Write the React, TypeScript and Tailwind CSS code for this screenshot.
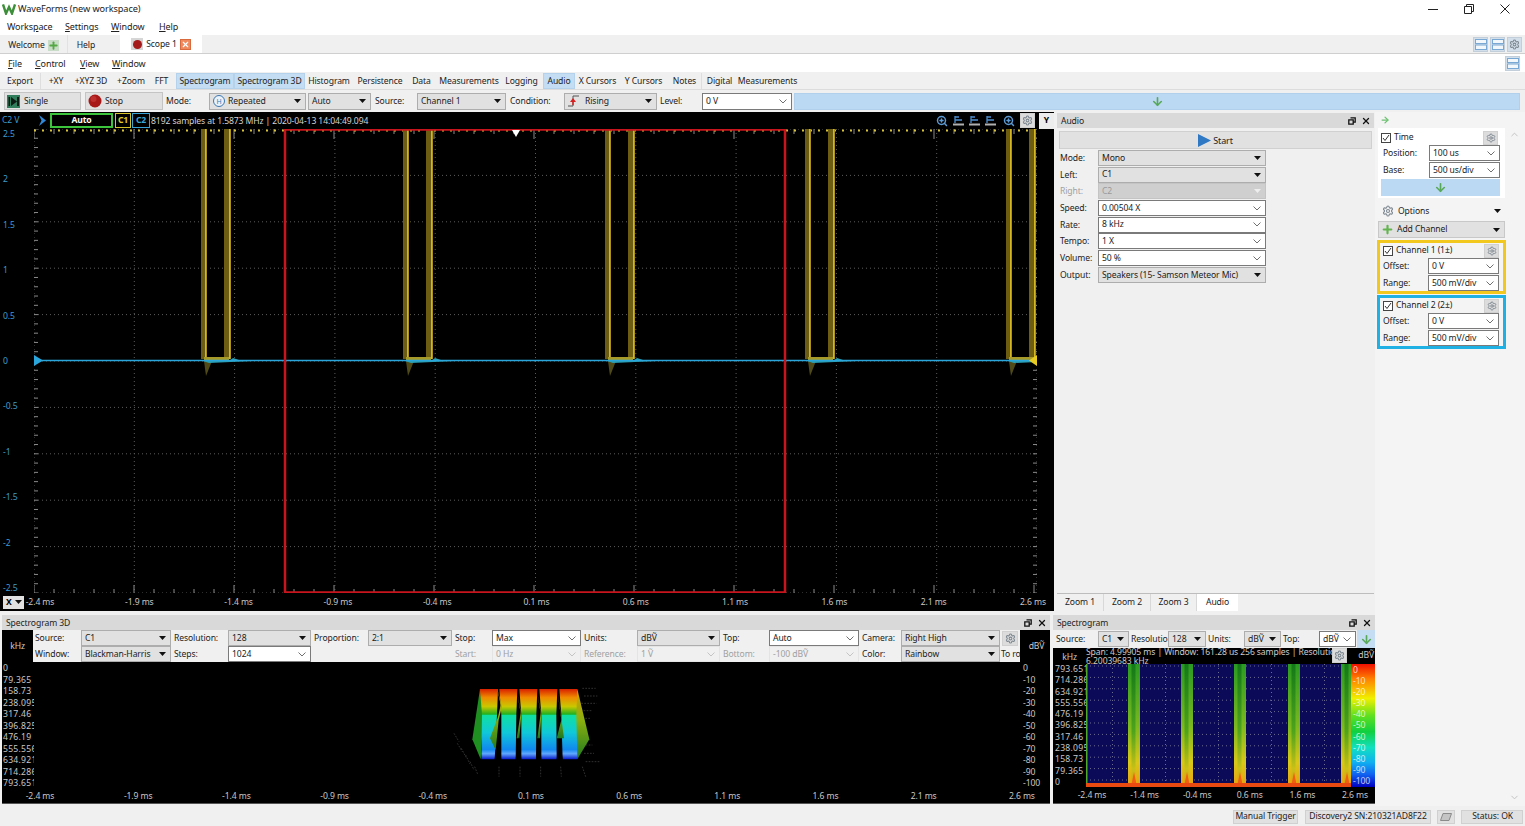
import React from "react";
import { X, Settings, ZoomIn, Plus, ArrowRight, ArrowDown, ChevronDown, ChevronUp } from "lucide-react";

type Kind = "gray" | "white" | "dis" | "disGray";

const Caret = ({ light }: { light?: boolean }) => (
  <svg width="7" height="4" viewBox="0 0 7 4" className="shrink-0">
    <path d="M0 0H7L3.5 4Z" fill={light ? "#eeeeee" : "#111111"} />
  </svg>
);
const Chev = ({ light }: { light?: boolean }) => (
  <svg width="8" height="5" viewBox="0 0 8 5" className="shrink-0">
    <path d="M0.5 0.5L4 4L7.5 0.5" fill="none" stroke={light ? "#c4c4c4" : "#707070"} strokeWidth="1" />
  </svg>
);

function Sel({ v, kind = "white", className = "", icon }: { v: string; kind?: Kind; className?: string; icon?: React.ReactNode }) {
  const k = {
    gray: "bg-[#e1e1e1] border-[#adadad] text-[#222]",
    white: "bg-white border-[#7a7a7a] text-[#222]",
    dis: "bg-[#f0f0f0] border-[#e4e4e4] text-[#a0a0a0]",
    disGray: "bg-[#cfcfcf] border-[#c4c4c4] text-[#9a9a9a]",
  }[kind];
  return (
    <div className={`flex items-center justify-between h-[16px] border pl-[3px] pr-[4px] overflow-hidden whitespace-nowrap ${k} ${className}`}>
      <span className="flex items-center gap-[3px] min-w-0">{icon}{v}</span>
      {kind === "gray" && <Caret />}
      {kind === "disGray" && <Caret light />}
      {kind === "white" && <Chev />}
      {kind === "dis" && <Chev light />}
    </div>
  );
}

const Gear = ({ size = 10, box = "w-[15px] h-[14px]" }: { size?: number; box?: string }) => (
  <div className={`flex items-center justify-center bg-[#dcdcdc] border border-[#d0d0d0] shrink-0 ${box}`}>
    <Settings size={size} strokeWidth={2.2} color="#7d8790" />
  </div>
);

const Check = () => (
  <div className="w-[10px] h-[10px] border border-[#444] bg-white flex items-center justify-center shrink-0">
    <svg width="8" height="8" viewBox="0 0 8 8"><path d="M1 4L3 6.5L7 1" fill="none" stroke="#333" strokeWidth="1" /></svg>
  </div>
);

const TitleBtns = () => (
  <div className="flex items-center gap-[5px] ml-auto pr-[3px]">
    <svg width="8" height="8" viewBox="0 0 8 8"><path d="M2.5 0.8H7.2V5.2H5.5M0.8 2.8H5.2V7.2H0.8Z" fill="none" stroke="#111" strokeWidth="1.3" /></svg>
    <X size={10} strokeWidth={3} color="#111" />
  </div>
);

const PanelTitle = ({ t }: { t: string }) => (
  <div className="flex items-center h-[15px] bg-[#d9d9d9] pl-[4px] text-[#222] shrink-0">
    <span className="pt-[1px]">{t}</span>
    <TitleBtns />
  </div>
);

const LayoutIcon = ({ kind }: { kind: number }) => (
  <div className="w-[15px] h-[15px] bg-[#d3dfea] border border-[#c2ced9] flex items-center justify-center shrink-0">
    {kind === 2 ? (
      <Settings size={11} strokeWidth={2.2} color="#7d8790" />
    ) : (
      <svg width="12" height="11" viewBox="0 0 12 11">
        <rect x="0.5" y="0.5" width="11" height="4" fill="#f2f7fb" stroke="#79a8d4" />
        <rect x="0.5" y="6" width="11" height="4.5" fill="#f2f7fb" stroke="#79a8d4" />
      </svg>
    )}
  </div>
);

const toolbar: [string, string, boolean?][] = [
  ["Export", "w-[41px] border-r border-[#dedede]"],
  ["+XY", "w-[24px] ml-[3px]"],
  ["+XYZ 3D", "w-[44px] ml-[1px]"],
  ["+Zoom", "w-[36px]"],
  ["FFT", "w-[25px]"],
  ["Spectrogram", "w-[58px] ml-[2px]", true],
  ["Spectrogram 3D", "w-[71px]", true],
  ["Histogram", "w-[48px]"],
  ["Persistence", "w-[54px]"],
  ["Data", "w-[29px]"],
  ["Measurements", "w-[66px]"],
  ["Logging", "w-[39px]"],
  ["Audio", "w-[32px] ml-[2px]", true],
  ["X Cursors", "w-[43px] ml-[1px]"],
  ["Y Cursors", "w-[49px]"],
  ["Notes", "w-[34px] border-r border-[#dedede]"],
  ["Digital", "w-[35px]"],
  ["Measurements", "w-[61px]"],
];

const PULSES = [203, 405, 607, 807, 1008];

function ScopePlot() {
  const W = 1003, H = 464;
  const ticks: number[] = [];
  for (let x = 0; x <= W; x += 20) ticks.push(x);
  const sub: number[] = [];
  for (let y = 0; y <= H; y += 9.28) sub.push(y);
  return (
    <svg width={W} height={H} viewBox={`0 0 ${W} ${H}`} className="block shrink-0">
      <rect width={W} height={H} fill="#000" />
      {Array.from({ length: 11 }, (_, i) => (
        <line key={i} x1={i * 100.3} x2={i * 100.3} y1="0" y2={H} stroke="#5c5c5c" strokeWidth="1" strokeDasharray="1 3" />
      ))}
      {Array.from({ length: 11 }, (_, i) => (
        <line key={i} x1="0" x2={W} y1={i * 46.4} y2={i * 46.4} stroke="#5c5c5c" strokeWidth="1" strokeDasharray="1 3" />
      ))}
      {ticks.map((x) => (
        <g key={x}>
          <line x1={x} x2={x} y1="0" y2={x % 100 === 0 ? 10 : 5} stroke="#8a8a8a" />
          <line x1={x} x2={x} y1={H} y2={H - (x % 100 === 0 ? 8 : 4)} stroke="#8a8a8a" />
        </g>
      ))}
      {sub.map((y) => (
        <g key={y}>
          <line x1="0" x2="4" y1={y} y2={y} stroke="#8a8a8a" />
          <line x1={W - 4} x2={W} y1={y} y2={y} stroke="#8a8a8a" />
        </g>
      ))}
      <line x1="0" x2={W} y1="1.5" y2="1.5" stroke="#d8c23a" strokeWidth="2" strokeDasharray="2 6" />
      {PULSES.map((p, i) => {
        const a = p - 34;
        return (
          <g key={i}>
            <rect x={a - 2} y="0" width="6" height="230" fill="#6c5d12" />
            <rect x={a + 2} y="0" width="1.6" height="230" fill="#d4b522" />
            <rect x={a + 21} y="0" width="7" height="230" fill="#6c5d12" />
            <rect x={a + 26} y="0" width="1.6" height="230" fill="#d4b522" />
            <rect x={a + 1} y="228" width="25" height="3" fill="#a89a28" />
            <polygon points={`${a + 1},232 ${a + 9},232 ${a + 3},247`} fill="#4f4a18" />
            <polygon points={`${a},232 ${a + 26},232 ${a + 30},229 ${a + 36},231 ${a + 50},232 ${a + 6},234`} fill="#2a9fb5" />
          </g>
        );
      })}
      <line x1="0" x2={W} y1="231.5" y2="231.5" stroke="#2ba6dc" strokeWidth="1.6" />
      <rect x="251" y="0.5" width="500" height="463" fill="none" stroke="#c8141c" strokeWidth="2.5" />
      <polygon points="478,1 486,1 482,8" fill="#fff" />
      <polygon points="0,226 9,231.5 0,237" fill="#2ba6dc" />
      <polygon points="1003,226 995,231.5 1003,237" fill="#e8cb22" />
    </svg>
  );
}

function Spec3D() {
  const cols = [
    [108, 162, 152, 112],
    [166, 220, 215, 172],
    [226, 280, 276, 232],
    [286, 340, 338, 292],
    [346, 400, 400, 356],
  ];
  return (
    <svg width="170" height="110" viewBox="0 0 510 330" className="block -mt-[2px]">
      <defs>
        <linearGradient id="r3" x1="0" y1="0" x2="0" y2="1">
          <stop offset="0" stopColor="#d82000" />
          <stop offset="0.12" stopColor="#f08a00" />
          <stop offset="0.25" stopColor="#c8c800" />
          <stop offset="0.36" stopColor="#20b020" />
          <stop offset="0.37" stopColor="#10e0a0" />
          <stop offset="0.62" stopColor="#10c8d8" />
          <stop offset="0.86" stopColor="#1088f0" />
          <stop offset="0.92" stopColor="#60a8ff" />
          <stop offset="1" stopColor="#0818c8" />
        </linearGradient>
        <linearGradient id="s3" x1="0" y1="0" x2="0" y2="1">
          <stop offset="0" stopColor="#d8a000" />
          <stop offset="0.45" stopColor="#8ab010" />
          <stop offset="1" stopColor="#1f7a20" />
        </linearGradient>
      </defs>
      {[[30, 190, 45, 215], [40, 220, 55, 245], [52, 235, 66, 262], [65, 255, 78, 282], [78, 275, 90, 300], [92, 290, 102, 315], [165, 290, 165, 320], [228, 290, 228, 320], [290, 290, 290, 320], [350, 290, 352, 320], [415, 290, 425, 320]].map((d, i) => (
        <line key={i} x1={d[0]} y1={d[1]} x2={d[2]} y2={d[3]} stroke="#4a4a4a" strokeWidth="2" strokeDasharray="5 4" />
      ))}
      {[[415, 55, 455], [420, 78, 460], [412, 100, 458], [410, 122, 445], [415, 145, 440], [425, 225, 445], [420, 250, 450], [425, 275, 468]].map((d, i) => (
        <line key={i} x1={d[0]} y1={d[1]} x2={d[2]} y2={d[1]} stroke="#4a4a4a" strokeWidth="2" strokeDasharray="5 4" />
      ))}
      <polygon points="108,57 118,135 110,268 85,208" fill="#1f8f22" />
      <polygon points="108,57 122,80 118,135" fill="#c87a00" />
      <polygon points="400,57 436,208 400,268 388,135" fill="url(#s3)" />
      {cols.map((c, i) => (
        <polygon key={i} points={`${c[0]},57 ${c[1]},57 ${c[1] - 3},135 ${c[2]},268 ${c[3]},268 ${c[0] + 6},135`} fill="url(#r3)" />
      ))}
      <polygon points="160,57 170,105 162,140 138,205 155,240 164,150 174,110" fill="url(#s3)" />
      <polygon points="220,70 230,130 218,205 226,205 232,135" fill="url(#s3)" />
      <polygon points="280,70 290,130 280,205 288,205 292,135" fill="url(#s3)" />
      <polygon points="340,60 352,150 338,205 360,205 350,130" fill="url(#s3)" />
      {[[152, 268, 172, 268, 162, 215], [215, 268, 232, 268, 224, 200], [276, 268, 292, 268, 285, 200], [338, 268, 356, 268, 347, 208]].map((t, i) => (
        <polygon key={i} points={`${t[0]},${t[1]} ${t[2]},${t[3]} ${t[4]},${t[5]}`} fill="#000" />
      ))}
    </svg>
  );
}

function SpecPlot() {
  const bands = [42, 95, 148, 202, 255];
  return (
    <svg width="265" height="123" viewBox="0 0 265 123" className="block shrink-0 relative z-0">
      <defs>
        <linearGradient id="b1" x1="0" y1="0" x2="0" y2="1">
          <stop offset="0" stopColor="#2a9a22" />
          <stop offset="0.5" stopColor="#7ab820" />
          <stop offset="0.8" stopColor="#d8c818" />
          <stop offset="1" stopColor="#e8a010" />
        </linearGradient>
        <linearGradient id="b2" x1="0" y1="0" x2="0" y2="1">
          <stop offset="0" stopColor="#127818" />
          <stop offset="0.55" stopColor="#4fa41c" />
          <stop offset="0.85" stopColor="#c8c018" />
          <stop offset="1" stopColor="#e09010" />
        </linearGradient>
      </defs>
      <rect width="265" height="123" fill="#0a0a58" />
      {Array.from({ length: 11 }, (_, i) => (
        <line key={i} x1="0" x2="265" y1={i * 11.4 + 2} y2={i * 11.4 + 2} stroke="#6c6c90" strokeDasharray="1 3" />
      ))}
      {Array.from({ length: 11 }, (_, i) => (
        <line key={i} x1={i * 26.5} x2={i * 26.5} y1="0" y2="123" stroke="#6c6c90" strokeDasharray="1 3" />
      ))}
      <rect x="0" y="0" width="1.5" height="123" fill="#4faa2a" />
      {bands.map((x, i) => (
        <g key={i}>
          <rect x={x} y="0" width={i === 4 ? 10 : 12} height="123" fill="url(#b1)" />
          <rect x={x + 3.5} y="0" width="4" height="123" fill="url(#b2)" />
          <polygon points={`${x + 3},123 ${x + 9},123 ${x + 6},108`} fill="#f06010" />
        </g>
      ))}
      <rect x="0" y="119" width="265" height="4" fill="#e84a10" />
    </svg>
  );
}

const Row3D = ({ labels }: { labels: string[] }) => (
  <>
    {labels.map((t) => (
      <span key={t} className="block h-[11.5px] leading-[11.5px] whitespace-nowrap">{t}</span>
    ))}
  </>
);

const AxisLabels = ({ labels }: { labels: string[] }) => (
  <>
    {labels.map((t) => (
      <span key={t} className="w-[32px] text-center whitespace-nowrap">{t}</span>
    ))}
  </>
);

const KHZ = ["0", "79.365", "158.73", "238.095", "317.46", "396.825", "476.19", "555.556", "634.921", "714.286", "793.651"];
const DB = ["0", "-10", "-20", "-30", "-40", "-50", "-60", "-70", "-80", "-90", "-100"];
const XT = ["-2.4 ms", "-1.9 ms", "-1.4 ms", "-0.9 ms", "-0.4 ms", "0.1 ms", "0.6 ms", "1.1 ms", "1.6 ms", "2.1 ms", "2.6 ms"];

function ChannelBox({ name, color }: { name: string; color: string }) {
  return (
    <div className={`border-[3px] h-[54px] flex flex-col px-[1px] ${color}`}>
      <div className="flex items-center h-[15px] gap-[3px] pl-[2px] pr-[3px] shrink-0">
        <Check />
        <span>{name}</span>
        <div className="ml-auto"><Gear /></div>
      </div>
      <div className="grid grid-cols-[47px_71px] gap-y-[1px]">
        <span className="pl-[2px] leading-[16px]">Offset:</span><Sel v="0 V" />
        <span className="pl-[2px] leading-[16px]">Range:</span><Sel v="500 mV/div" />
      </div>
    </div>
  );
}

const AUDIO: [string, string, Kind][] = [
  ["Mode:", "Mono", "gray"],
  ["Left:", "C1", "gray"],
  ["Right:", "C2", "disGray"],
  ["Speed:", "0.00504 X", "white"],
  ["Rate:", "8 kHz", "white"],
  ["Tempo:", "1 X", "white"],
  ["Volume:", "50 %", "white"],
  ["Output:", "Speakers (15- Samson Meteor Mic)", "gray"],
];

export default function App() {
  return (
    <div className="w-[1525px] h-[826px] overflow-hidden flex flex-col bg-[#f0f0f0] text-[#222] text-[8.6px] tracking-[-0.1px] leading-none font-['Noto_Sans',sans-serif]">
      {/* title bar */}
      <div className="flex items-center h-[18px] bg-white shrink-0 pl-[2px] text-[9.2px]">
        <svg width="14" height="12" viewBox="0 0 14 12" className="mr-[2px]">
          <path d="M1 1.5L4 10.5L7 4L10 10.5L13 1.5" fill="none" stroke="#3d8f3a" strokeWidth="2.4" />
        </svg>
        <span>WaveForms (new workspace)</span>
        <div className="ml-auto flex items-center gap-[26px] pr-[15px]">
          <svg width="10" height="10" viewBox="0 0 10 10"><path d="M0 5.5H10" stroke="#222" strokeWidth="1" /></svg>
          <svg width="10" height="10" viewBox="0 0 10 10"><path d="M2.5 2.5V0.5H9.5V7.5H7.5M0.5 2.5H7.5V9.5H0.5Z" fill="none" stroke="#222" strokeWidth="1" /></svg>
          <svg width="10" height="10" viewBox="0 0 10 10"><path d="M0.5 0.5L9.5 9.5M9.5 0.5L0.5 9.5" stroke="#222" strokeWidth="1" /></svg>
        </div>
      </div>
      {/* menu */}
      <div className="flex items-center h-[17px] bg-white shrink-0 pl-[7px] text-[9px]">
        <span className="w-[58px]">Works<u>p</u>ace</span>
        <span className="w-[46px]"><u>S</u>ettings</span>
        <span className="w-[48px]"><u>W</u>indow</span>
        <span><u>H</u>elp</span>
      </div>
      {/* tabs */}
      <div className="flex items-stretch h-[19px] border-b border-[#cfcfcf] shrink-0">
        <div className="w-[68px] flex items-center justify-center gap-[3px] border-r border-[#e2e2e2] pt-[2px]">
          <span>Welcome</span>
          <div className="w-[11px] h-[11px] bg-[#c8dcc8] flex items-center justify-center"><Plus size={11} strokeWidth={4} color="#55a845" /></div>
        </div>
        <div className="w-[52px] flex items-center justify-center pr-[16px] pt-[2px]">Help</div>
        <div className="w-[82px] bg-white flex items-center justify-center gap-[3px]">
          <div className="bg-[#d6d6d6] w-[12px] h-[12px] flex items-center justify-center"><svg width="9" height="9" viewBox="0 0 9 9"><circle cx="4.5" cy="4.5" r="4.5" fill="#a51a1a" /></svg></div>
          <span>Scope 1</span>
          <div className="w-[11px] h-[11px] bg-[#ee8a5e] border border-[#d86a3e] flex items-center justify-center"><X size={9} strokeWidth={3} color="#fff" /></div>
        </div>
        <div className="ml-auto flex items-center gap-[2px] pr-[3px]">
          <LayoutIcon kind={0} /><LayoutIcon kind={1} /><LayoutIcon kind={2} />
        </div>
      </div>
      {/* scope menu */}
      <div className="flex items-center h-[18px] bg-white shrink-0 pl-[8px] text-[9px]">
        <span className="w-[27px]"><u>F</u>ile</span>
        <span className="w-[45px]"><u>C</u>ontrol</span>
        <span className="w-[32px]"><u>V</u>iew</span>
        <span><u>W</u>indow</span>
        <div className="ml-auto pr-[5px]"><LayoutIcon kind={0} /></div>
      </div>
      {/* toolbar */}
      <div className="flex items-center h-[18px] border-b border-[#dcdcdc] shrink-0">
        {toolbar.map(([t, c, active], i) => (
          <div key={i} className={`flex items-center justify-center h-[16px] pt-[1px] whitespace-nowrap ${c} ${active ? "bg-[#c4ddf3] border border-[#b4d2ec]" : ""}`}>{t}</div>
        ))}
      </div>
      {/* controls */}
      <div className="flex items-center h-[22px] shrink-0 pl-[4px]">
        <div className="w-[77px] h-[18px] bg-[#e1e1e1] border border-[#c4c4c4] flex items-center gap-[4px] pl-[2px]">
          <svg width="13" height="13" viewBox="0 0 13 13"><rect width="13" height="13" fill="#2f7d5a" /><path d="M3 2V11H1.5V2ZM4 2L10 6.5L4 11ZM10 2H12V11H10Z" fill="#0c1c14" /></svg>
          <span>Single</span>
        </div>
        <div className="w-[78px] h-[18px] ml-[4px] bg-[#e1e1e1] border border-[#c4c4c4] flex items-center gap-[3px] pl-[2px]">
          <svg width="14" height="14" viewBox="0 0 14 14"><circle cx="7" cy="7" r="6.5" fill="#a81818" /><circle cx="5.5" cy="5" r="3" fill="#cc4040" opacity="0.6" /></svg>
          <span>Stop</span>
        </div>
        <span className="w-[43px] ml-[3px]">Mode:</span>
        <Sel v="Repeated" kind="gray" className="w-[97px] !h-[17px]" icon={
          <span className="w-[12px] h-[12px] rounded-full border border-[#3d78b0] bg-[#eaf2fa] text-[#3d78b0] text-[7px] flex items-center justify-center">H</span>
        } />
        <Sel v="Auto" kind="gray" className="w-[63px] !h-[17px] ml-[2px]" />
        <span className="w-[42px] ml-[4px]">Source:</span>
        <Sel v="Channel 1" kind="gray" className="w-[89px] !h-[17px]" />
        <span className="w-[54px] ml-[4px]">Condition:</span>
        <Sel v="Rising" kind="gray" className="w-[93px] !h-[17px]" icon={
          <svg width="14" height="14" viewBox="0 0 14 14"><path d="M0 12H5V2H11" fill="none" stroke="#555" strokeWidth="1" /><path d="M5 4L8 8H2Z" fill="#d82020" /><rect x="4.3" y="7" width="1.4" height="4" fill="#d82020" /></svg>
        } />
        <span className="w-[42px] ml-[3px]">Level:</span>
        <Sel v="0 V" className="w-[90px] !h-[17px]" />
        <div className="ml-[2px] w-[726px] h-[17px] bg-[#bcd9f3] border border-[#b0d0ec] flex items-center justify-center">
          <ArrowDown size={13} strokeWidth={3} color="#58a85a" />
        </div>
      </div>
      {/* main */}
      <div className="flex flex-1 min-h-0">
        <div className="w-[1375px] flex flex-col shrink-0">
          {/* top row */}
          <div className="flex h-[501px] shrink-0">
            {/* scope */}
            <div className="w-[1054px] h-[499px] bg-black text-[#c4c4c4] flex flex-col shrink-0">
              <div className="flex items-center h-[17px] shrink-0">
                <span className="w-[38px] pl-[2px] text-[#3d9bd0]">C2 V</span>
                <svg width="9" height="11" viewBox="0 0 9 11"><path d="M1 0L8 5.5L1 11L3.5 5.5Z" fill="#2f88d8" /></svg>
                <div className="ml-[3px] w-[63px] h-[15px] border-2 border-[#3cc43c] flex items-center justify-center font-bold text-white">Auto</div>
                <div className="ml-[2px] w-[16px] h-[15px] border border-[#d8c22a] text-[#e0c828] font-bold flex items-center justify-center">C1</div>
                <div className="ml-[1px] w-[18px] h-[15px] border border-[#3aa4d8] text-[#3aa4d8] font-bold flex items-center justify-center">C2</div>
                <span className="ml-[1px] pt-[1px] text-[#d4d4d4]">8192 samples at 1.5873 MHz | 2020-04-13 14:04:49.094</span>
                <div className="ml-auto flex items-center">
                  <ZoomIn size={12} strokeWidth={3} color="#5d9bd5" />
                  {[0, 1, 2].map((i) => (
                    <svg key={i} width="11" height="11" viewBox="0 0 11 11" className="ml-[5px]">
                      <path d="M2 1V8M2 2H6M2 5H9" stroke="#4d8fd0" strokeWidth="1.3" fill="none" />
                      <rect x="0" y="8.5" width="11" height="2" fill="#b0b0b0" />
                    </svg>
                  ))}
                  <ZoomIn size={12} strokeWidth={3} color="#5d9bd5" className="ml-[7px]" />
                  <div className="ml-[5px]"><Gear size={11} box="w-[15px] h-[15px]" /></div>
                  <div className="ml-[4px] w-[15px] h-[16px] bg-[#ececec] text-black font-bold flex items-center justify-center">Y</div>
                </div>
              </div>
              <div className="flex h-[464px] shrink-0">
                <div className="w-[34px] flex flex-col justify-between pl-[3px] shrink-0 text-[#3d9bd0]">
                  {["2.5", "2", "1.5", "1", "0.5", "0", "-0.5", "-1", "-1.5", "-2", "-2.5"].map((t) => (
                    <span key={t} className="h-[10px] leading-[10px]">{t}</span>
                  ))}
                </div>
                <ScopePlot />
              </div>
              <div className="flex items-center h-[18px] shrink-0">
                <div className="ml-[3px] w-[21px] h-[13px] bg-[#e1e1e1] text-black font-bold flex items-center justify-between pl-[3px] pr-[2px] shrink-0">
                  X<Caret />
                </div>
                <div className="flex justify-between flex-1 pr-[5px] text-[#c8c8c8]">
                  <AxisLabels labels={XT} />
                </div>
              </div>
            </div>
            {/* audio */}
            <div className="ml-[3px] w-[317px] h-[498px] flex flex-col pt-[1px] shrink-0">
              <PanelTitle t="Audio" />
              <div className="mt-[3px] mx-[2px] h-[18px] bg-[#e1e1e1] border border-[#d0d0d0] flex items-center justify-center gap-[2px] shrink-0">
                <svg width="13" height="13" viewBox="0 0 13 13"><path d="M0 0L13 6.5L0 13Z" fill="#2f78c4" /></svg>
                <span className="text-[9px]">Start</span>
              </div>
              <div className="grid grid-cols-[38px_168px] gap-y-[0.7px] pl-[3px] mt-[1px]">
                {AUDIO.map(([l, v, k]) => (
                  <React.Fragment key={l}>
                    <span className={`leading-[16px] ${k === "disGray" ? "text-[#a0a0a0]" : ""}`}>{l}</span>
                    <Sel v={v} kind={k} />
                  </React.Fragment>
                ))}
              </div>
              <div className="mt-auto flex h-[18px] border-t border-[#bdbdbd] shrink-0 -mb-[1px]">
                <div className="w-[47px] flex items-center justify-center border-r border-[#d8d8d8]">Zoom 1</div>
                <div className="w-[47px] flex items-center justify-center border-r border-[#d8d8d8]">Zoom 2</div>
                <div className="w-[46px] flex items-center justify-center border-r border-[#d8d8d8]">Zoom 3</div>
                <div className="w-[41px] flex items-center justify-center bg-white">Audio</div>
              </div>
            </div>
          </div>
          {/* bottom row */}
          <div className="flex h-[191px] shrink-0">
            {/* spectrogram 3d */}
            <div className="ml-[2px] w-[1048px] flex flex-col shrink-0 border-b border-[#555]">
              <div className="mt-[2px]"><PanelTitle t="Spectrogram 3D" /></div>
              <div className="flex h-[32px] shrink-0">
                <div className="w-[31px] bg-black text-[#ccc] flex items-center justify-center">kHz</div>
                <div className="w-[987px] grid grid-cols-[48px_90px_57px_83px_57px_84px_40px_89px_56px_83px_49px_90px_42px_99px_20px] items-center">
                  <span className="pl-[2px]">Source:</span><Sel v="C1" kind="gray" />
                  <span className="pl-[3px]">Resolution:</span><Sel v="128" kind="gray" />
                  <span className="pl-[3px]">Proportion:</span><Sel v="2:1" kind="gray" />
                  <span className="pl-[3px]">Stop:</span><Sel v="Max" />
                  <span className="pl-[3px]">Units:</span><Sel v="dBṼ" kind="gray" />
                  <span className="pl-[3px]">Top:</span><Sel v="Auto" />
                  <span className="pl-[3px]">Camera:</span><Sel v="Right High" kind="gray" />
                  <div className="pl-[2px]"><Gear box="w-[16px] h-[15px]" size={11} /></div>
                  <span className="pl-[2px]">Window:</span><Sel v="Blackman-Harris" kind="gray" />
                  <span className="pl-[3px]">Steps:</span><Sel v="1024" />
                  <span /><span />
                  <span className="pl-[3px] text-[#a0a0a0]">Start:</span><Sel v="0 Hz" kind="dis" />
                  <span className="pl-[3px] text-[#a0a0a0]">Reference:</span><Sel v="1 Ṽ" kind="dis" />
                  <span className="pl-[3px] text-[#a0a0a0]">Bottom:</span><Sel v="-100 dBṼ" kind="dis" />
                  <span className="pl-[3px]">Color:</span><Sel v="Rainbow" kind="gray" />
                  <span className="pl-[1px] overflow-hidden whitespace-nowrap">To ro</span>
                </div>
                <div className="flex-1 bg-black text-[#ccc] flex items-center justify-center pl-[3px]">dBṼ</div>
              </div>
              <div className="flex-1 bg-black text-[#c8c8c8] flex flex-col min-h-0">
                <div className="flex h-[127px] shrink-0">
                  <div className="w-[32px] pt-[1px] overflow-hidden shrink-0 pl-[1px] tracking-[0.25px]"><Row3D labels={KHZ} /></div>
                  <div className="flex-1 flex items-center justify-center"><Spec3D /></div>
                  <div className="w-[27px] pt-[1px] shrink-0"><Row3D labels={DB} /></div>
                </div>
                <div className="flex justify-between flex-1 items-center pl-[22px] pr-[12px]">
                  <AxisLabels labels={XT} />
                </div>
              </div>
            </div>
            {/* spectrogram */}
            <div className="ml-[3px] w-[322px] flex flex-col shrink-0 border-b border-[#555]">
              <div className="mt-[2px]"><PanelTitle t="Spectrogram" /></div>
              <div className="flex items-center h-[18px] shrink-0">
                <span className="w-[45px] pl-[3px]">Source:</span>
                <Sel v="C1" kind="gray" className="w-[31px]" />
                <span className="w-[39px] pl-[2px] overflow-hidden whitespace-nowrap">Resolution:</span>
                <Sel v="128" kind="gray" className="w-[38px]" />
                <span className="w-[38px] pl-[2px]">Units:</span>
                <Sel v="dBṼ" kind="gray" className="w-[37px]" />
                <span className="w-[38px] pl-[2px]">Top:</span>
                <Sel v="dBṼ" className="w-[37px]" />
                <div className="w-[18px] ml-[1px] h-[18px] bg-[#c4ddf3] flex items-center justify-center"><ArrowDown size={13} strokeWidth={3} color="#58a85a" /></div>
              </div>
              <div className="flex-1 min-h-0 bg-black text-[#c8c8c8] flex flex-col">
                <div className="flex h-[16px] shrink-0">
                  <div className="w-[33px] flex items-center justify-center pt-[2px]">kHz</div>
                  <div className="w-[250px] leading-[9px] text-[#cccccc] whitespace-nowrap">Span: 4.99905 ms | Window: 161.28 us 256 samples | Resolution:<br />6.20039683 kHz</div>
                  <div className="relative z-10 -ml-[4px]"><Gear size={11} box="w-[15px] h-[15px]" /></div>
                  <div className="ml-auto pt-[3px] pr-[1px]">dBṼ</div>
                </div>
                <div className="flex shrink-0 h-[123px]">
                  <div className="w-[33px] shrink-0 overflow-hidden pl-[2px] flex flex-col justify-between tracking-[0.25px]">
                    {[...KHZ].reverse().map((t) => <span key={t} className="h-[10px] leading-[10px] whitespace-nowrap">{t}</span>)}
                  </div>
                  <SpecPlot />
                  <div className="flex-1 flex flex-col justify-between pl-[2px] py-[1px] text-white/75 bg-[linear-gradient(to_bottom,#f01000_0%,#ff8000_12%,#f0f000_28%,#60e020_42%,#10d040_55%,#10e0c0_68%,#10b0f0_80%,#1060f0_90%,#0000c0_100%)] relative z-0">
                    {DB.map((t) => <span key={t} className="h-[10px] leading-[10px]">{t}</span>)}
                  </div>
                </div>
                <div className="flex justify-between flex-1 items-center pl-[23px] pr-[4px]">
                  <AxisLabels labels={["-2.4 ms", "-1.4 ms", "-0.4 ms", "0.6 ms", "1.6 ms", "2.6 ms"]} />
                </div>
              </div>
            </div>
          </div>
        </div>
        {/* sidebar */}
        <div className="flex-1 flex bg-[#f4f4f4] min-w-0">
          <div className="w-[129px] ml-[2px] flex flex-col shrink-0">
            <div className="h-[16px] flex items-center pl-[3px] shrink-0"><ArrowRight size={10} strokeWidth={3} color="#6cc070" /></div>
            <div className="mx-[1px] h-[70px] bg-white flex flex-col px-[3px] pt-[2px] shrink-0">
              <div className="flex items-center h-[15px] gap-[3px] shrink-0">
                <Check /><span>Time</span>
                <div className="ml-auto mr-[4px]"><Gear /></div>
              </div>
              <div className="grid grid-cols-[48px_71px] gap-y-[1px]">
                <span className="pl-[2px] leading-[16px]">Position:</span><Sel v="100 us" />
                <span className="pl-[2px] leading-[16px]">Base:</span><Sel v="500 us/div" />
              </div>
              <div className="mt-[1px] h-[17px] w-[119px] bg-[#bcd9f3] flex items-center justify-center"><ArrowDown size={13} strokeWidth={3} color="#58a85a" /></div>
            </div>
            <div className="mt-[5px] h-[16px] flex items-center gap-[4px] pl-[4px] pr-[4px] mx-[1px] shrink-0">
              <Settings size={12} strokeWidth={2.2} color="#7d8790" />
              <span>Options</span>
              <div className="ml-auto"><Caret /></div>
            </div>
            <div className="mt-[2px] h-[17px] mx-[1px] bg-[#e1e1e1] border border-[#c8c8c8] flex items-center gap-[3px] pl-[2px] pr-[4px] shrink-0">
              <Plus size={13} strokeWidth={4} color="#62b44f" />
              <span>Add Channel</span>
              <div className="ml-auto"><Caret /></div>
            </div>
            <div className="mt-[2px]"><ChannelBox name="Channel 1 (1±)" color="border-[#f2c81e]" /></div>
            <div className="mt-[1px]"><ChannelBox name="Channel 2 (2±)" color="border-[#1fb0e4]" /></div>
          </div>
          <div className="flex-1 flex flex-col items-center justify-between pt-[17px] pb-[3px] pr-[4px] pl-[2px]">
            <ChevronUp size={11} color="#c0c0c0" />
            <ChevronDown size={11} color="#c0c0c0" />
          </div>
        </div>
      </div>
      {/* status */}
      <div className="flex items-center justify-end h-[20px] shrink-0 pr-[2px] pt-[1px]">
        <div className="w-[65px] h-[14px] bg-[#e1e1e1] border border-[#d0d0d0] flex items-center justify-center whitespace-nowrap">Manual Trigger</div>
        <div className="ml-[7px] w-[126px] h-[14px] bg-[#e1e1e1] border border-[#d0d0d0] flex items-center justify-center whitespace-nowrap">Discovery2 SN:210321AD8F22</div>
        <div className="ml-[6px] w-[18px] h-[14px] bg-[#e1e1e1] border border-[#d0d0d0] flex items-center justify-center">
          <svg width="12" height="8" viewBox="0 0 12 8"><path d="M3 0.5H11.5L9 7.5H0.5Z" fill="#c4c4c4" stroke="#8a8a8a" /></svg>
        </div>
        <div className="ml-[6px] w-[62px] h-[14px] bg-[#e1e1e1] border border-[#d0d0d0] flex items-center justify-end pr-[9px] whitespace-nowrap">Status: OK</div>
      </div>
    </div>
  );
}
